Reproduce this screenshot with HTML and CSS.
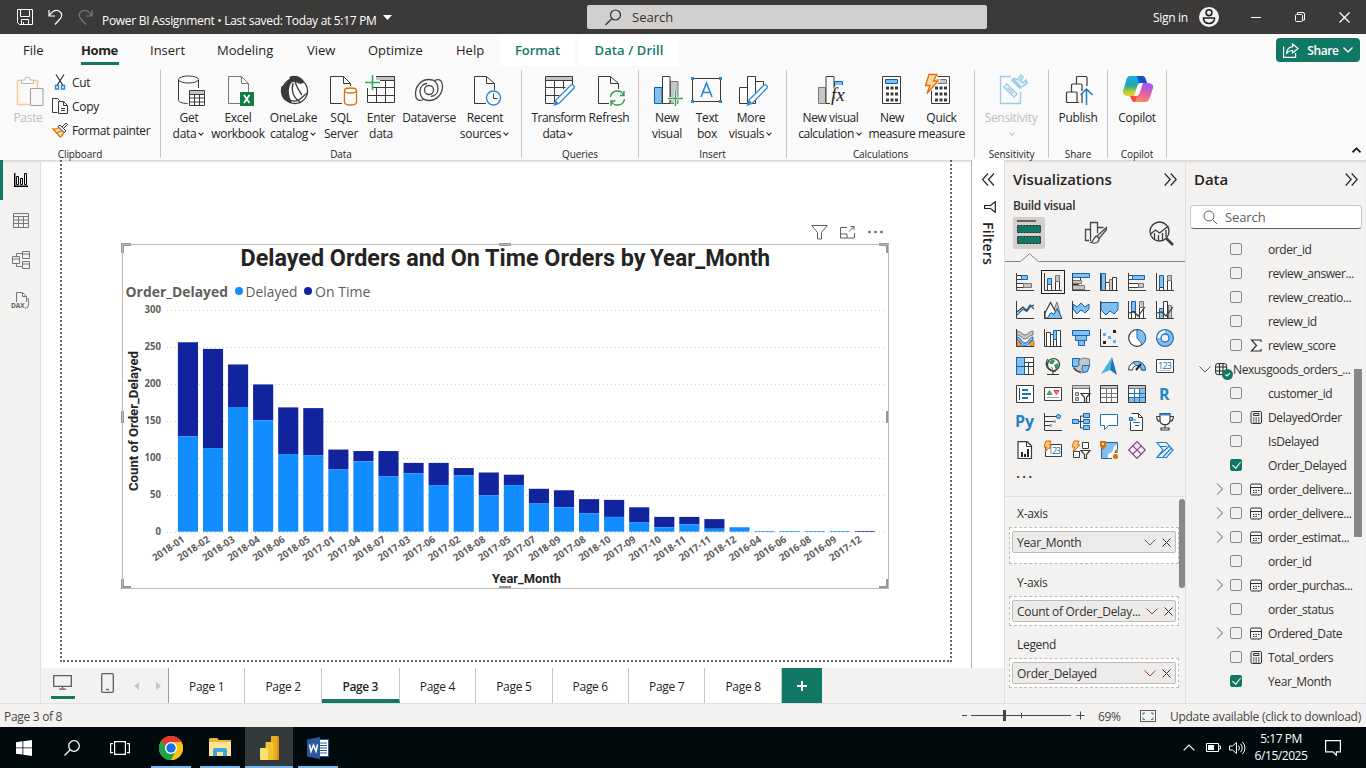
FILE: index.html
```html
<!DOCTYPE html>
<html lang="en">
<head>
<meta charset="utf-8">
<title>Power BI Assignment</title>
<link rel="stylesheet" href="styles.css">
</head>
<body>
<div class="app">
<header class="titlebar">
  <svg class="tb-save" width="16" height="16" viewBox="0 0 16 16" fill="none" stroke="#fff"><path d="M.5.5h15v15h-13l-2-2zM3.500.5v7h9v-7M4.500 15.500v-5h7v5M6.500 13v2.500"/></svg>
  <svg class="tb-undo" width="15" height="16" viewBox="0 0 15 16" fill="none" stroke="#fff" stroke-width="1.200"><path d="M1 1v6h6M1 7C4 2.500 8 .5 11 2c4 2.500 3 6 1 8L7 15.500"/></svg>
  <svg class="tb-redo" width="15" height="16" viewBox="0 0 15 16" fill="none" stroke="#797775" stroke-width="1.200"><path d="M14 1v6H8M14 7C11 2.500 7 .5 4 2 0 4.500 1 8 3 10l5 5.500"/></svg>
  <span class="doc-name">Power BI Assignment <b>•</b> Last saved: Today at 5:17 PM</span>
  <svg class="tb-caret" width="9" height="5" viewBox="0 0 9 5"><path d="M0 0h9L4.500 5z" fill="#fff"/></svg>
  <div class="top-search"><svg width="17" height="17" viewBox="0 0 17 17" fill="none" stroke="#323130" stroke-width="1.200"><circle cx="10.500" cy="6" r="5"/><path d="M7 9.500L.5 16"/></svg><span>Search</span></div>
  <span class="signin">Sign in</span>
  <svg class="avatar" width="20" height="20" viewBox="0 0 20 20"><circle cx="10" cy="10" r="10" fill="#f3f2f1"/><g fill="none" stroke="#201f1e" stroke-width="1.600"><circle cx="10" cy="5.700" r="2.900"/><path d="M4.500 11h11c.5 3-2 5.500-5.500 5.500S4 14 4.500 11z"/></g></svg>
  <svg class="win-min" width="10" height="10" viewBox="0 0 10 10"><path d="M0 5.500h10" stroke="#fff"/></svg>
  <svg class="win-max" width="10" height="10" viewBox="0 0 10 10" fill="none" stroke="#fff"><rect x=".5" y="2.500" width="7" height="7" rx="1"/><path d="M2.500 2V.5H8q1.500 0 1.500 1.500v6H8"/></svg>
  <svg class="win-close" width="11" height="11" viewBox="0 0 11 11"><path d="M.5.5l10 10M10.500.5l-10 10" stroke="#fff" stroke-width="1.200"/></svg>
</header>

<section class="ribbon">
  <nav class="rtabs">
    <a class="t-file">File</a><a class="t-home">Home</a><a class="t-insert">Insert</a><a class="t-model">Modeling</a><a class="t-view">View</a><a class="t-opt">Optimize</a><a class="t-help">Help</a><a class="t-format">Format</a><a class="t-drill">Data / Drill</a>
    <button class="share"><svg width="16" height="15" viewBox="0 0 16 15" fill="none" stroke="#fff" stroke-width="1.200"><path d="M.6 3.500v10.900h12V10M9.500 1l5.500 4.500-5.500 4.500V7.500C7 7.500 5 8.500 3.500 11 3.800 6.500 6 4 9.500 3.800z"/></svg><span>Share</span><svg width="10" height="6" viewBox="0 0 10 6" fill="none" stroke="#fff" stroke-width="1.300"><path d="M.5.5L5 5 9.500.5"/></svg></button>
  </nav>
  <div class="groups">
    <div class="group g-clip">
      <div class="gitems">
        <div class="rb w-paste off"><svg width="32" height="32" viewBox="-2 -1 32 32" fill="none"><path d="M8.500 4.500h-5v24h13" stroke="#f3cf9f" stroke-width="1.500"/><path d="M5 6v21h11V13h7V6" stroke="#fbeed5" stroke-width="1.500"/><path d="M19 4.500h4.500v8" stroke="#f3cf9f" stroke-width="1.500"/><path d="M7.500 7.500V4h3q0-3 3-3t3 3h3v3.500z" fill="#fafafa" stroke="#b9b7b5"/><path d="M16.500 12.500h12.500v17H16.500z" fill="#f7f7f7" stroke="#a19f9d"/></svg><span>Paste</span></div>
        <div class="clips">
          <div><svg width="16" height="16" viewBox="0 0 16 16" fill="none"><path d="M4 .5l7 11M12 .5l-7 11" stroke="#3b3a39" stroke-width="1.300"/><path d="M3.500 11.500h3v3.500h-3zM9.500 11.500h3v3.500h-3z" stroke="#2b88d8" stroke-width="1.400"/></svg><span>Cut</span></div>
          <div><svg width="16" height="16" viewBox="0 0 16 16" fill="none" stroke="#3b3a39"><path d="M5.500 14.500h-5V.5h5l2 2M6.500 3.500h5l4 4v8h-9zM11.500 3.500v4h4M9 10.500h4M9 12.500h4"/></svg><span>Copy</span></div>
          <div><svg width="16" height="16" viewBox="0 0 16 16" fill="none"><path d="M1 7c3 .5 5-.5 6-2l5 5c-1 3-2 4-4 5z" fill="#fbd9a4" stroke="#d86f0b" stroke-width="1.300"/><path d="M4 11l6-2" stroke="#d86f0b"/><path d="M6 4.500L8 3l6 6-2 1.500zM10 5l4-4 1.500 1.500-4 4" fill="#fafafa" stroke="#3b3a39"/></svg><span class="fp">Format painter</span></div>
        </div>
      </div><div class="glabel">Clipboard</div>
    </div>
    <div class="group g-data">
      <div class="gitems">
        <div class="rb w44"><svg width="32" height="32" viewBox="0 0 32 32" fill="none" stroke="#3b3a39"><path d="M5.500 5v20c0 2 4 3.500 9 3.500M25.500 5v8"/><ellipse cx="15.500" cy="4.500" rx="10" ry="3.500"/><path d="M16.500 15.500h15v15h-15z" fill="#fff"/><path d="M17 16h14v3H17z" fill="#c8c6c4" stroke="none"/><path d="M16.500 19.500h15M16.500 23h15M16.500 27h15M21.500 19v11M26.500 19v11"/></svg><span>Get<br>data<i class="cv"></i></span></div>
        <div class="rb w54"><svg width="32" height="32" viewBox="0 0 32 32" fill="none"><path d="M18 28.500H6.500V1.500h13l7 7V17M19.500 1.500v7h7" stroke="#797775"/><rect x="18" y="17" width="14" height="14" fill="#107c41"/><path d="M22 20l5.500 8M27.500 20L22 28" stroke="#fff" stroke-width="1.800"/></svg><span>Excel<br>workbook</span></div>
        <div class="rb w56"><svg width="32" height="32" viewBox="-1 0 32 32" fill="none" stroke="#3b3a39" stroke-width="1.300"><circle cx="17" cy="16" r="12.500" fill="#fff"/><path d="M13 3C9 2 20-1 25 6c1 2-3 3-6 1-4-2-7 0-8 4-2 6-1 10 2 16C6 26 2 20 4 12 6 12 9 8 13 3z" fill="#3b3a39"/><path d="M15 8c-2 8 1 15 7 19M17 7c2 6 4 9 7 13M12 25c8 4 12-3 17-7"/></svg><span>OneLake<br>catalog<i class="cv"></i></span></div>
        <div class="rb w40"><svg width="32" height="32" viewBox="0 0 32 32" fill="none"><path d="M17 28.500H5.500V1.500h13l7 7V11M18.500 1.500v7h7" stroke="#3b3a39"/><path d="M19.500 16v11c0 4 12 4 12 0V16" fill="#fff" stroke="#d86f0b" stroke-width="1.300"/><ellipse cx="25.500" cy="15.500" rx="6" ry="2.500" fill="#fff" stroke="#d86f0b" stroke-width="1.300"/></svg><span>SQL<br>Server</span></div>
        <div class="rb w40"><svg width="32" height="32" viewBox="0 0 32 32" fill="none"><path d="M11 2h18v3H11z" fill="#c8c6c4"/><path d="M11 1.500h18.500v26h-27V13M15 5.500h14M8 12.500h21M3 20.500h26M11.500 12v15M20.500 5.500V27" stroke="#3b3a39"/><path d="M7.500 0v15M0 7.500h15" stroke="#37a660" stroke-width="1.600"/></svg><span>Enter<br>data</span></div>
        <div class="rb w56"><svg width="32" height="32" viewBox="0 0 32 32" fill="none" stroke="#484644" stroke-width="1.300"><path d="M10.500 24.500C5 27 2.500 24 2.500 19C2.500 11 8 4.500 16 4.500c6 0 9 4 9 9.500 0 4-3 7-7 7.500"/><path d="M21.500 5.500C27 3 29.500 6 29.500 11C29.500 19 24 25.500 16 25.500c-6 0-9-4-9-9.500 0-4 3-7 7-7.500"/><circle cx="16" cy="15" r="4.500"/></svg><span>Dataverse</span></div>
        <div class="rb w56"><svg width="32" height="32" viewBox="0 0 32 32" fill="none"><path d="M17 28.500H5.500V1.500h12l8 7V15M17.500 1.500v7h8" stroke="#3b3a39"/><circle cx="24.500" cy="23" r="7" fill="#fff" stroke="#2b88d8" stroke-width="1.400"/><path d="M24.500 18.500v5h4" stroke="#3b3a39"/></svg><span>Recent<br>sources<i class="cv"></i></span></div>
      </div><div class="glabel">Data</div>
    </div>
    <div class="group g-query">
      <div class="gitems">
        <div class="rb w62"><svg width="32" height="32" viewBox="0 0 32 32" fill="none"><path d="M3 2h27v3.500H3z" fill="#c8c6c4"/><path d="M12 28.500H3.500v-27h27V10M3.500 5.500h27M3.500 12.500h20M3.500 20.500h14M12.500 5.500v22M21.500 5.500V14" stroke="#3b3a39"/><path d="M12.500 30l1.500-5L29 10c2-1 4 1 3 3L17 28.500z" fill="#fff" stroke="#2b88d8" stroke-width="1.300"/><path d="M12 30l2-4 3 2.500z" fill="#2b88d8"/></svg><span>Transform<br>data<i class="cv"></i></span></div>
        <div class="rb w39"><svg width="32" height="32" viewBox="0 0 32 32" fill="none"><path d="M16 28.500H5.500V1.500h12l8 7V14M17.500 1.500v7h8" stroke="#3b3a39"/><path d="M17.500 22c1-7 10-8 13-2.500M31 16v4.500h-4M31.500 24c-1 7-10 8-13 2.500M18 31v-5h4.500" stroke="#2c9f48" stroke-width="1.400"/></svg><span>Refresh</span></div>
      </div><div class="glabel">Queries</div>
    </div>
    <div class="group g-insert">
      <div class="gitems">
        <div class="rb w40"><svg width="32" height="32" viewBox="0 0 32 32" fill="none"><path d="M3.500 12.500h7.500v16H3.500z" fill="#83beec" stroke="#0063b1"/><path d="M19.500 6.500h7.500v22h-7.500z" fill="#c8c6c4" stroke="#797775"/><path d="M11.500 1.500h7.500v27h-7.500z" fill="#fff" stroke="#3b3a39"/><path d="M24.500 15v16M17 23.500h15" stroke="#fafafa" stroke-width="3"/><path d="M24.500 15v16M17 23.500h15" stroke="#37a660" stroke-width="1.400"/></svg><span>New<br>visual</span></div>
        <div class="rb w40"><svg width="32" height="32" viewBox="1 0 32 32" fill="none"><rect x="2.500" y="3.500" width="28" height="23" stroke="#3b3a39"/><path d="M1 2h3v3H1zM29 2h3v3h-3zM1 25h3v3H1zM29 25h3v3h-3z" fill="#2b88d8"/><path d="M11 22l5.500-14L22 22M13 17.500h7" stroke="#2b88d8" stroke-width="1.600"/></svg><span>Text<br>box</span></div>
        <div class="rb w48"><svg width="32" height="32" viewBox="0 0 32 32" fill="none"><path d="M12.500 12.500h-8v16h8M20.500 6.500h8V14M12.500 1.500h8v27h-8z" fill="#fff" stroke="#3b3a39"/><path d="M12.500 30l1.500-5L29 10c2-1 4 1 3 3L17 28.500z" fill="#fff" stroke="#2b88d8" stroke-width="1.300"/><path d="M12 30l2-5 3 3z" fill="#2b88d8"/></svg><span>More<br>visuals<i class="cv"></i></span></div>
      </div><div class="glabel">Insert</div>
    </div>
    <div class="group g-calc">
      <div class="gitems">
        <div class="rb w76"><svg width="32" height="32" viewBox="0 0 32 32" fill="none"><path d="M5.500 12.500h7v16h-7z" fill="#c8c6c4" stroke="#797775"/><path d="M21.500 6.500h8v8h-8z" fill="#83beec" stroke="#0063b1"/><path d="M21 24V1.500h-8v27h4" stroke="#3b3a39"/><path d="M17 19L23 10h8v12H19z" fill="#fafafa"/><text class="fx" x="18" y="26">fx</text></svg><span>New visual<br>calculation<i class="cv"></i></span></div>
        <div class="rb w50"><svg width="32" height="32" viewBox="0 0 32 32" fill="none"><path d="M6.500 1.500h18v27h-18z" fill="#fff" stroke="#3b3a39"/><path d="M9.500 4.500h12v4h-12z" fill="#83beec" stroke="#0063b1"/><path d="M10 13h12M10 19h12M10 25h12" stroke="#3b3a39" stroke-width="3" stroke-dasharray="3 1.500"/></svg><span>New<br>measure</span></div>
        <div class="rb w49"><svg width="32" height="32" viewBox="1 0 32 32" fill="none"><path d="M6.500 1.500h18v27h-18z" fill="#fff" stroke="#3b3a39"/><path d="M9.500 4.500h12v4h-12z" fill="#c8c6c4" stroke="#797775"/><path d="M10 13h12M10 19h12M10 25h12" stroke="#3b3a39" stroke-width="3" stroke-dasharray="3 1.500"/><path d="M4-.5h8L8.500 6H13L2 18.500 5 10.500H.5z" fill="#fcd8a0" stroke="#fafafa" stroke-width="3"/><path d="M4-.5h8L8.500 6H13L2 18.500 5 10.500H.5z" fill="#fcd8a0" stroke="#d86f0b" stroke-width="1.300"/></svg><span>Quick<br>measure</span></div>
      </div><div class="glabel">Calculations</div>
    </div>
    <div class="group g-sens">
      <div class="gitems"><div class="rb w62 off"><svg width="32" height="32" viewBox="0 0 32 32" fill="none" stroke="#9fcce8" stroke-width="1.300"><path d="M16 1.500H5.500v27h20V17"/><path d="M9 12l3-3 10 10-3 3zM12.500 12.500l6 6" stroke-width="1.500"/><path d="M17 4l9 9" stroke-width="3.500"/><path d="M19 3l4 2 3-5 2 2-3 4 3 2 3-3 1 3-5 4" stroke-width="1.700"/></svg><span>Sensitivity<br><i class="cv"></i></span></div></div><div class="glabel">Sensitivity</div>
    </div>
    <div class="group g-share">
      <div class="gitems"><div class="rb w50"><svg width="32" height="32" viewBox="0 0 32 32" fill="none" stroke="#3b3a39" stroke-width="1.200"><path d="M17 27.500H5q-.5 0-.5-1V18q0-1 1-1H14q1 0 1 1v10M9.500 17v-7q0-1 1-1H19q1 0 1 1v6M14.500 9V2.500q0-1 1-1H24q1 0 1 1V11M20 18v10"/><path d="M24.500 30V14M18.500 20l6-6 6 6" stroke="#1b80bd" stroke-width="1.500"/></svg><span>Publish</span></div></div><div class="glabel">Share</div>
    </div>
    <div class="group g-copilot">
      <div class="gitems"><div class="rb w50"><svg width="32" height="32" viewBox="-1 1 32 32"><defs><linearGradient id="ca" x1="0" y1="0" x2="0" y2="1"><stop offset="0" stop-color="#1aa6ee"/><stop offset=".5" stop-color="#2ba8a0"/><stop offset=".8" stop-color="#b9d432"/><stop offset="1" stop-color="#f8c82a"/></linearGradient><linearGradient id="cb" x1=".2" y1="0" x2="0" y2="1"><stop offset="0" stop-color="#a05af0"/><stop offset=".5" stop-color="#ec5f9c"/><stop offset="1" stop-color="#ff9a4c"/></linearGradient></defs><path d="M8 2h12q3 0 3.500 3l1.500 4h-6q-3 0-4 4l-3 9H5q-5-1-4-5L4 7q1-5 4-5z" fill="url(#ca)"/><path d="M15 2h5q3 0 3.500 3l1.500 4h-8z" fill="#1b4fc7"/><path d="M23 28H13q-3 0-3.500-3L8 22h6q3 0 4-4l3-9h6q5 1 4 5l-3 9q-1 5-5 5z" fill="url(#cb)"/><path d="M8 22h7l-2 6q-3 0-3.500-3z" fill="#ef4e45"/></svg><span>Copilot</span></div></div><div class="glabel">Copilot</div>
    </div>
    <svg class="collapse" width="9" height="6" viewBox="0 0 9 6" fill="none" stroke="#201f1e" stroke-width="1.800"><path d="M.5 5.300l4-4 4 4"/></svg>
  </div>
</section>

<main class="work">
  <nav class="views">
    <div class="v on"><svg width="14" height="14" viewBox="0 0 14 14" fill="none" stroke="#000"><path d="M.7 0v13.300H14" stroke-width="1.400"/><path d="M2.500 3.500h2v8h-2zM6.500 5.500h2v6h-2zM10.500.5h2v11h-2z"/></svg></div>
    <div class="v"><svg width="16" height="15" viewBox="0 0 16 15" fill="none" stroke="#797775"><path d="M.5.5h15v14H.5zM.5 3.500h15M.5 7h15M.5 10.500h15M5.500 3.500v11M10.500 3.500v11"/></svg></div>
    <div class="v"><svg width="18" height="18" viewBox="1 0 18 18" fill="none" stroke="#797775"><path d="M.5 5.500h7v7h-7zM.5 8h7M10.500.5h7v7h-7zM10.500 3h7M10.500 10.500h7v7h-7zM10.500 13h7M4.500 5.500v-3h6M4.500 12.500v3h6"/></svg></div>
    <div class="v"><svg width="18" height="17" viewBox="1 0 18 17" fill="none" stroke="#797775"><path d="M4.500 10V.5h6l4 4V10M10.500.5v4h4M16 6q1.500 5 0 9l-3 1.500"/><text class="daxt" x="-1" y="16">DAX</text></svg></div>
  </nav>
  <div class="center">
    <div class="stage">
      <div class="canvas">
        <div class="page">
          <div class="visual-tools">
            <svg width="17" height="15" viewBox="0 0 17 15" fill="none" stroke="#605e5c"><path d="M.8.5h15.400L10.500 7.500v6.500h-4V7.500z"/></svg>
            <svg width="15" height="13" viewBox="0 0 15 13" fill="none" stroke="#605e5c"><path d="M7 1.500H.5v10.500h14V7M.5 8H7v4M9 5.500L14 .5M10.500.5H14V4"/></svg>
            <svg width="15" height="4" viewBox="0 0 15 4" fill="#605e5c"><circle cx="1.500" cy="2" r="1.300"/><circle cx="7.500" cy="2" r="1.300"/><circle cx="13.500" cy="2" r="1.300"/></svg>
          </div>
          <svg class="chart" id="chart" width="768" height="346" viewBox="121 243 768 346"></svg>
        </div>
      </div>
      <aside class="filters">
        <svg width="13" height="13" viewBox="0 0 13 13" fill="none" stroke="#252423" stroke-width="1.200"><path d="M6 .5l-5.500 6 5.500 6M12 .5l-5.500 6 5.500 6"/></svg>
        <svg width="12" height="12" viewBox="0 0 12 12" fill="none" stroke="#252423" stroke-width="1.200"><path d="M11.300.7v10.600L6.500 7.500H.6v-3h5.900z"/></svg>
        <span>Filters</span>
      </aside>
    </div>
    <div class="pages">
      <div class="devices">
        <div class="desk"><svg width="19" height="15" viewBox="0 0 19 15" fill="none" stroke="#605e5c" stroke-width="1.300"><path d="M.7.7h17.600v10.600H.7zM9.500 11v3M6 14.200h7"/></svg></div>
        <div class="phone"><svg width="13" height="20" viewBox="0 0 13 20" fill="none" stroke="#605e5c" stroke-width="1.300"><rect x=".7" y=".7" width="11.600" height="18.600" rx="1"/><path d="M5 16.500h3"/></svg></div>
        <svg class="pg-l" width="5" height="8" viewBox="0 0 5 8"><path d="M5 0v8L0 4z" fill="#c8c6c4"/></svg>
        <svg class="pg-r" width="5" height="8" viewBox="0 0 5 8"><path d="M0 0v8l5-4z" fill="#c8c6c4"/></svg>
      </div>
      <a>Page 1</a><a>Page 2</a><a class="cur">Page 3</a><a>Page 4</a><a>Page 5</a><a>Page 6</a><a>Page 7</a><a>Page 8</a><button class="add"><svg width="10" height="10" viewBox="0 0 10 10"><path d="M5 0v10M0 5h10" stroke="#fff" stroke-width="2"/></svg></button>
    </div>
  </div>

  <aside class="viz">
    <div class="phead"><h2>Visualizations</h2><svg width="13" height="13" viewBox="0 0 13 13" fill="none" stroke="#252423" stroke-width="1.200"><path d="M.7.5l5.500 6-5.500 6M6.700.5l5.500 6-5.500 6"/></svg></div>
    <div class="build">Build visual</div>
    <div class="vtabs">
      <div class="vt sel"><svg width="24" height="26" viewBox="0 0 24 26"><path d="M0 1h19" stroke="#201f1e" stroke-width="1.200"/><path d="M.5 5.500h23v7H.5zM.5 16.500h23v7H.5z" fill="#117865" stroke="#201f1e" stroke-dasharray="2 1"/></svg></div>
      <div class="vt"><svg width="24" height="24" viewBox="-1 0 24 24" fill="none" stroke="#484644" stroke-width="1.300"><path d="M5 19.500H1.500v-11H6M6.500 20V1.500h7V12M13.500 6.500h6"/><path d="M22.500 6.500L13 15l2 2.500 7.500-9zM13 15c-3 0-3 5-6 6.500 4 1.500 8 .5 8-4" fill="#f3f2f1"/></svg></div>
      <div class="vt"><svg width="25" height="25" viewBox="0 0 25 25" fill="none" stroke="#3b3a39" stroke-width="1.300"><circle cx="10.500" cy="10.500" r="9.500"/><path d="M1.500 13l5-4 4 3 9-7M5.500 12v6M9.500 14v5M13.500 12v7M17 9v7"/><path d="M17.500 17.500l6.500 6.500" stroke-width="2.500"/></svg></div>
    </div>
    <svg class="pointer" width="180" height="9" viewBox="0 0 180 9" fill="none" stroke="#8a8886"><path d="M0 8.500h15.500L24.500.700 33.500 8.500H181"/></svg>
    <div class="vgrid">
      <svg viewBox="0 0 18 18"><path class="k" d="M.5 0v17.500H18"/><path class="k w" d="M.5 2.500h6v4h-6zM.5 10.500h8v4h-8z"/><path class="b" d="M5.500 2.500h6v4h-6z"/><path class="g" d="M7.500 10.500h8v4h-8z"/></svg>
      <svg class="chosen" viewBox="0 0 18 18"><path class="k" d="M.5 0v17.500H18"/><path class="k w" d="M3.500 11.500h4v6h-4zM11.500 7.500h4v10h-4z"/><path class="b" d="M3.500 5.500h4v6h-4z"/><path class="g" d="M11.500 2.500h4v6h-4z"/></svg>
      <svg viewBox="0 0 18 18"><path class="k w" d="M.5 4.500h8v3h-8zM.5 8.500h6v3h-6z"/><path class="g" d="M.5 7.500h9v3h-9zM.5 12.500h12v4H.5z"/><path class="b" d="M.5.5h17v4H.5z"/><path class="k" d="M.5 0v17.500H18"/></svg>
      <svg viewBox="0 0 18 18"><path class="b" d="M1.500.5h4v17h-4z"/><path class="k w" d="M5.500 9.500h4v8h-4z"/><path class="g" d="M9.500 6.500h3v11h-3z"/><path class="k w" d="M12.500 4.500h4v13h-4z"/><path class="k" d="M.5 0v17.500H18"/></svg>
      <svg viewBox="0 0 18 18"><path class="k" d="M.5 0v17.500H18"/><path class="k w" d="M.5 2.500h4v4h-4zM.5 10.500h10v4H.5z"/><path class="b" d="M4.500 2.500h12v4h-12z"/><path class="g" d="M10.500 10.500h5v4h-5z"/></svg>
      <svg viewBox="0 0 18 18"><path class="k" d="M.5 0v17.500H18"/><path class="b" d="M3.500 2.500h4v12h-4z"/><path class="k w" d="M3.500 14.500h4v3h-4zM11.500 7.500h4v10h-4z"/><path class="g" d="M11.500 2.500h4v5h-4z"/></svg>

      <svg viewBox="0 0 18 18"><path class="k" d="M.5 0v17.500H18"/><path class="bl" d="M1 14L7 8l3 2 4-6 4 4"/><path class="kl" d="M1 11l6-5 4 4 3-4 4-2"/></svg>
      <svg viewBox="0 0 18 18"><path class="g" d="M7 16L13 1l4 15z"/><path class="kl w" d="M1 12L6.500 1.500 15 17H1z"/><path class="b" d="M3 17.500l4-6 3 2 3-6 5 10z"/><path class="k" d="M.5 10v7.500H18"/></svg>
      <svg viewBox="0 0 18 18"><path class="w" d="M1 8l4 4 4-4 4 3 4-4v10H1z"/><path class="b" d="M1 3l4 3 4-4 4 4 4-3v5l-4 4-4-3-4 4-4-5z"/><path class="k" d="M.5 0v17.500H18"/></svg>
      <svg viewBox="0 0 18 18"><path class="w" d="M1 10l17-1v8H1z"/><path class="b" d="M1 1.500h17V9l-4 4-4-3-4 4-5-5z"/><path class="k" d="M.5 0v17.500H18"/></svg>
      <svg viewBox="0 0 18 18"><path class="b" d="M3.500.5h4v10h-4z"/><path class="k w" d="M3.500 10.500h4v7h-4zM11.500 6.500h4v11h-4z"/><path class="g" d="M11.500.5h4v6h-4z"/><path class="k" d="M.5 0v17.500H18"/><path class="kl" d="M1 12l5-1 4 4 7-9"/></svg>
      <svg viewBox="0 0 18 18"><path class="b" d="M3.500 7.500h4v10h-4z"/><path class="g" d="M12.500 4.500h3v13h-3z"/><path class="k w" d="M7.500.5h4v17h-4z"/><path class="k" d="M.5 0v17.500H18"/><path class="kl" d="M1 12l5-1 4 4 7-9"/></svg>

      <svg viewBox="0 0 18 18"><path class="o" d="M1 13h4v4H1zM14 12h4v5h-4z"/><path class="g" d="M1 2c4 0 5 4 8 4s4-4 8-4v4c-4 0-5 4-8 4s-4-4-8-4z"/><path class="b" d="M1 8c4 0 4 6 8 6s4-6 8-6v3c-3 0-4 6-8 6s-5-6-8-6z"/><path class="k" d="M.5 0v17.500H18"/></svg>
      <svg viewBox="0 0 18 18"><path class="k w" d="M2.500 3.500h4v14h-4zM12.500 1.500h4v16h-4z"/><path class="k w" d="M6.500 5.500h3v12h-3z"/><path class="b" d="M9.500 1.500h3v9h-3z"/><path class="k" d="M.5 0v17.500H18"/></svg>
      <svg viewBox="0 0 18 18"><path class="b" d="M.5 1.500h17v5H.5zM3.500 6.500h11v5h-11zM6.500 11.500h6v5h-6z"/></svg>
      <svg viewBox="0 0 18 18"><path class="k" d="M.5 0v17.500H18"/><path fill="#252423" d="M3 12h3v3H3zM13 1h3v3h-3z"/><path fill="#69afe5" d="M3 4h3v3H3zM8 7h3v3H8zM13 11h3v3h-3z"/></svg>
      <svg viewBox="0 0 18 18"><circle class="kl w" cx="9" cy="9" r="8.300"/><path class="b" d="M9 .7V9l5.500 6.500A8.300 8.300 0 0 0 9 .7z"/></svg>
      <svg viewBox="0 0 18 18"><circle cx="9" cy="9" r="6.300" fill="none" stroke="#83beec" stroke-width="4"/><path d="M9 2.700A6.300 6.300 0 0 0 2.700 9" fill="none" stroke="#fff" stroke-width="4"/><circle class="bl" cx="9" cy="9" r="8.400"/><circle class="bl" cx="9" cy="9" r="4"/></svg>

      <svg viewBox="0 0 18 18"><path class="k w" d="M.5.5h17v17H.5z"/><path class="b" d="M.5.5h8v9h-8zM.5 9.500h8v8h-8z"/><path class="k" d="M8.500 5.500h9M8.500 9.500h9M12.500 5.500v12"/></svg>
      <svg viewBox="0 0 18 18"><circle class="kl w" cx="9.500" cy="7.500" r="6"/><path fill="#319b52" d="M5 5l4-3 2 2-2 3H6zM10 8l4-2 1 3-3 4zM6 9l3 2v2z"/><path class="kl" d="M4 2Q1 6 3 10q3 5 9 4M9 14v3M3 17.500h12"/></svg>
      <svg viewBox="0 0 18 18"><path class="g" d="M.5 2l6 1 5-2 6 1v7l-3 5-6 2-6-3-2-5z"/><path class="b" d="M.5 1.500h7l-1 4 1 2-2 2h-5zM10.500 8.500h7l-2 6-4 1-1.500-3z"/><path class="kl" d="M2 11l3 3 4 1"/></svg>
      <svg viewBox="0 0 18 18"><path fill="#45b5de" d="M12 0L1 17l9-4z"/><path fill="#1a78b8" d="M12 0l5 18-7-5z"/></svg>
      <svg viewBox="0 0 18 18"><path class="k w" d="M.5 13a8.500 8.500 0 0 1 17 0h-4a4.500 4.500 0 0 0-9 0z"/><path class="b" d="M5 5.500a8.500 8.500 0 0 1 12.500 7.500h-4A4.500 4.500 0 0 0 8 8.500z"/><path d="M8 13l5-6" stroke="#252423" stroke-width="2"/></svg>
      <svg viewBox="0 0 18 18"><path class="k w" d="M.5 2.500h17v13H.5z"/><text class="num" x="2" y="11.500" textLength="14">123</text><path stroke="#c8c6c4" d="M3 13.500h12"/></svg>

      <svg viewBox="0 0 18 18"><path class="k w" d="M.5.5h17v17H.5z"/><path class="k" d="M3.500 3v12"/><path stroke="#1c74bd" stroke-width="1.800" d="M6 5h6M6 13h6M6 9h9"/></svg>
      <svg viewBox="0 0 18 18"><path class="k w" d="M.5 2.500h17v13H.5z"/><path fill="#4eac6c" stroke="#37a660" d="M3 9.500l2.500-4 2.500 4z"/><path fill="#f48a91" stroke="#e33340" d="M10 5.500h5l-2.500 4z"/><path stroke="#a19f9d" d="M3 12.500h12"/></svg>
      <svg viewBox="0 0 18 18"><path class="k w" d="M.5.5h17v17H.5z"/><path class="g" d="M.5.5h17v3H.5zM3.500 7.500h3v3h-3zM3.500 12.500h3v3h-3z"/><path class="kl w" d="M9 8.500h9l-3.500 4v5h-2v-5z"/></svg>
      <svg viewBox="0 0 18 18"><path class="k w" d="M.5.5h17v17H.5z"/><path class="g" d="M.5.5h17v3H.5z"/><path stroke="#797775" d="M.5 8.500h17M.5 12.500h17M6.500 4v13M11.500 4v13"/><path class="k" d="M.5.5h17v17H.5z"/></svg>
      <svg viewBox="0 0 18 18"><path class="k w" d="M.5.5h17v17H.5z"/><path class="g" d="M.5.5h17v3H.5z"/><path fill="#83beec" d="M12 4h5v13H1v-4h11z"/><path stroke="#1c74bd" d="M.5 8.500h17M.5 12.500h17M6.500 4v13M11.500 4v13"/><path class="k" d="M.5.5h17v17H.5z"/></svg>
      <svg viewBox="0 0 18 18"><text class="rpy" x="3" y="15">R</text></svg>

      <svg viewBox="0 0 18 18"><text class="rpy" x="-1" y="14">Py</text></svg>
      <svg viewBox="0 0 18 18"><path class="k" d="M.5 0v17.500H18M1 3.500h12M1 8.500h8M1 12.500h5"/><circle class="b" cx="14.500" cy="3.500" r="2"/><circle class="g" cx="10.500" cy="8.500" r="1"/><circle class="g" cx="6.500" cy="12.500" r="1"/></svg>
      <svg viewBox="0 0 18 18"><path class="k" d="M6 8.500h6M8.500 3v12M8.500 3h4M8.500 15h4"/><path class="b" d="M.5 6.500h6v4h-6zM11.500.5h6v4h-6zM11.500 6.500h6v4h-6zM11.500 12.500h6v4h-6z"/></svg>
      <svg viewBox="0 0 18 18"><path class="w" stroke="#1c74bd" d="M.5 1.500h17v11h-9l-4 4v-4h-4z"/></svg>
      <svg viewBox="0 0 18 18"><path class="k w" d="M3.500.5h7l4 4v13h-12v-9"/><path class="k" d="M10.500.5v4h4"/><path stroke="#1c74bd" d="M5 9.500h7M7 12.500h4M5 7h3"/><path class="b" d="M1.500 4.500h3v3h-3z"/></svg>
      <svg viewBox="0 0 18 18"><path class="kl w" d="M4 .7h10v6q0 5-5 5t-5-5zM4 3.500H.7q0 5 4 5M14 3.500h3.300q0 5-4 5M9 12v3M5 17h8v-2H5z"/><path stroke="#2b88d8" stroke-width="2" d="M4 1.500h10"/></svg>

      <svg viewBox="0 0 18 18"><path class="kl w" d="M2 .7h9l4.500 4v12.800H2z"/><path class="k" d="M10.500.5v5h5"/><path stroke="#252423" stroke-width="2" d="M6 16v-5M9 16v-3M12 16V8"/></svg>
      <svg viewBox="0 0 18 18"><path class="k w" d="M1.500 3.500h16v12h-16z"/><text class="num" x="4" y="12.500" textLength="13">123</text><path class="z" d="M2 0h5L5.500 4H8L1 11l1.500-5H0z"/></svg>
      <svg viewBox="0 0 18 18"><path class="k w" d="M10.500 1.500h6v6h-6zM1.500 10.500h6v6h-6z"/><path class="kl w" d="M9 9.500h9l-3.500 4v4h-2v-4z"/><path class="z" d="M2 0h5L5.500 4H8L1 11l1.500-5H0z"/></svg>
      <svg viewBox="0 0 18 18"><path class="b" d="M1.500 17.500V1.500h16V8L12 17.500z"/><path fill="#fff" d="M8 17q-1-4 2-5t3-4q1-4 4-4v4q-3 1-3 4t-3 5z"/><path fill="#f3f2f1" d="M12 12h6v6h-6z"/><path fill="#d86f0b" d="M0 0h6v5l-3 4-3-4z"/><circle fill="#d86f0b" cx="15.500" cy="15.500" r="2.500"/><circle fill="#d86f0b" cx="16.500" cy="10.500" r="1.500"/><circle fill="#fff" cx="3" cy="3" r="1"/></svg>
      <svg viewBox="0 0 18 18" fill="#fff" stroke="#8c3a96" stroke-width="1.200"><path d="M9 .7L17.300 9 9 17.300.7 9z"/><path d="M4.800 4.800l8.400 8.400M13.200 4.800l-8.400 8.400"/></svg>
      <svg viewBox="0 0 18 18" fill="#fff" stroke="#1b84d8" stroke-width="1.200"><path d="M1 1.500h9.500L17 9l-6.500 7.500H1L7 9z"/><path d="M4 5.500h7M2 15L13.500 5M7 16l8.500-9" /></svg>
    </div>
    <div class="dots">...</div>
    <div class="wells">
      <div class="wl">
        <label>X-axis</label>
        <div class="well tall"><div class="pill"><span>Year_Month</span><svg width="12" height="7" viewBox="0 0 12 7"><path d="M.5.5L6 6l5.500-5.500" fill="none" stroke="#2b6cb0"/></svg><svg width="9" height="9" viewBox="0 0 9 9"><path d="M.5.5l8 8M8.500.5l-8 8" stroke="#323130"/></svg></div></div>
        <label>Y-axis</label>
        <div class="well"><div class="pill"><span>Count of Order_Delay...</span><svg width="12" height="7" viewBox="0 0 12 7"><path d="M.5.5L6 6l5.500-5.500" fill="none" stroke="#9a4a2a"/></svg><svg width="9" height="9" viewBox="0 0 9 9"><path d="M.5.5l8 8M8.500.5l-8 8" stroke="#323130"/></svg></div></div>
        <label class="l3">Legend</label>
        <div class="well"><div class="pill"><span>Order_Delayed</span><svg width="12" height="7" viewBox="0 0 12 7"><path d="M.5.5L6 6l5.500-5.500" fill="none" stroke="#9a4a2a"/></svg><svg width="9" height="9" viewBox="0 0 9 9"><path d="M.5.5l8 8M8.500.5l-8 8" stroke="#323130"/></svg></div></div>
      </div>
      <div class="vscroll"></div>
    </div>
  </aside>

  <aside class="data">
    <div class="phead"><h2>Data</h2><svg width="13" height="13" viewBox="0 0 13 13" fill="none" stroke="#252423" stroke-width="1.200"><path d="M.7.5l5.500 6-5.500 6M6.700.5l5.500 6-5.500 6"/></svg></div>
    <div class="dsearch"><svg width="15" height="15" viewBox="0 0 15 15" fill="none" stroke="#605e5c"><circle cx="6" cy="6" r="5"/><path d="M9.500 9.500L14 14"/></svg><span>Search</span></div>
    <svg class="defs" width="0" height="0"><defs>
      <symbol id="cal" viewBox="0 0 13 13"><g fill="none" stroke="#323130"><rect x=".5" y="1" width="11" height="11" rx="1.500"/><path d="M1 4.500h10.500"/><path d="M3 7.500h7M3 9.500h4" stroke-dasharray="1.500 1"/></g></symbol>
      <symbol id="calc" viewBox="0 0 13 13"><g fill="none" stroke="#323130"><rect x="1" y=".5" width="10.500" height="12" rx="1.500"/><path d="M3.500 2.500h5.500v2H3.500z"/><path d="M3 7h7M3 9h7M3 11h7" stroke-dasharray="1.500 1"/></g></symbol>
      <symbol id="sum" viewBox="0 0 13 13"><path d="M11 3V1H1.500l5 5.500-5 5.500H11v-2" fill="none" stroke="#323130" stroke-width="1.200"/></symbol>
      <symbol id="chev" viewBox="0 0 8 12"><path d="M1 .5L6.500 6 1 11.500" fill="none" stroke="#605e5c"/></symbol>
    </defs></svg>
    <div class="dlist">
      <ul>
        <li><i></i><b></b><u></u><span>order_id</span></li>
        <li><i></i><b></b><u></u><span>review_answer...</span></li>
        <li><i></i><b></b><u></u><span>review_creatio...</span></li>
        <li><i></i><b></b><u></u><span>review_id</span></li>
        <li><i></i><b></b><u><svg><use href="#sum"/></svg></u><span>review_score</span></li>
        <li class="table"><svg class="tchev" width="12" height="7" viewBox="0 0 12 7"><path d="M.5.5L6 6l5.500-5.500" fill="none" stroke="#605e5c"/></svg><svg class="ticon" width="18" height="18" viewBox="0 0 18 18" fill="none" stroke="#252423"><rect x=".6" y="1.600" width="11" height="11" rx="2"/><path d="M4.500 1.500v11M8 1.500v11M.5 5h11M.5 9h11"/><circle cx="12.500" cy="12.500" r="5.500" fill="#117865" stroke="none"/><path d="M10.500 12.500l1.500 1.500 2.800-2.800" stroke="#fff" stroke-width="1.200"/></svg><span>Nexusgoods_orders_...</span></li>
        <li><i></i><b></b><u></u><span>customer_id</span></li>
        <li><i></i><b></b><u><svg><use href="#calc"/></svg></u><span>DelayedOrder</span></li>
        <li><i></i><b></b><u></u><span>IsDelayed</span></li>
        <li><i></i><b class="ck"></b><u></u><span>Order_Delayed</span></li>
        <li><i><svg><use href="#chev"/></svg></i><b></b><u><svg><use href="#cal"/></svg></u><span>order_delivere...</span></li>
        <li><i><svg><use href="#chev"/></svg></i><b></b><u><svg><use href="#cal"/></svg></u><span>order_delivere...</span></li>
        <li><i><svg><use href="#chev"/></svg></i><b></b><u><svg><use href="#cal"/></svg></u><span>order_estimat...</span></li>
        <li><i></i><b></b><u></u><span>order_id</span></li>
        <li><i><svg><use href="#chev"/></svg></i><b></b><u><svg><use href="#cal"/></svg></u><span>order_purchas...</span></li>
        <li><i></i><b></b><u></u><span>order_status</span></li>
        <li><i><svg><use href="#chev"/></svg></i><b></b><u><svg><use href="#cal"/></svg></u><span>Ordered_Date</span></li>
        <li><i></i><b></b><u><svg><use href="#calc"/></svg></u><span>Total_orders</span></li>
        <li><i></i><b class="ck"></b><u></u><span>Year_Month</span></li>
      </ul>
      <div class="dscroll"></div>
    </div>
  </aside>
</main>

<footer class="status">
  <span class="pgof">Page 3 of 8</span>
  <svg class="slider" width="125" height="13" viewBox="0 0 125 13" stroke="#484644"><path d="M1 6.500h5M10 6.500h100M60.500 4v5"/><path d="M43.500 1v11" stroke-width="3"/><path d="M119.500 2.500v8M115.500 6.500h8"/></svg>
  <span class="pct">69%</span>
  <svg class="fit" width="16" height="12" viewBox="0 0 16 12" fill="none"><rect x=".5" y=".5" width="15" height="11" stroke="#6b5468"/><path d="M3 5V3h2M11 3h2v2M13 7.500v2h-2M5 9.500H3v-2" stroke="#2b8a57"/></svg>
  <span class="upd">Update available (click to download)</span>
</footer>

<footer class="taskbar">
  <div class="tk start"><svg width="16" height="16" viewBox="0 0 16 16" fill="#fff"><path d="M0 2.200l6.500-.9v6.200H0zM7.300 1.200L16 0v7.500H7.300zM0 8.300h6.500v6.300L0 13.700zM7.300 8.300H16V16l-8.700-1.200z"/></svg></div>
  <div class="tk"><svg width="16" height="16" viewBox="0 0 16 16" fill="none" stroke="#fff" stroke-width="1.300"><circle cx="10" cy="6" r="5.300"/><path d="M6 10L.5 15.500"/></svg></div>
  <div class="tk"><svg width="20" height="14" viewBox="0 0 20 14" fill="none" stroke="#fff" stroke-width="1.200"><path d="M4.600.6h10.800v12.800H4.600zM3 2.600H.6v9H3M17 2.600h2.400v9H17"/></svg></div>
  <div class="tk run chrome"><svg width="24" height="24" viewBox="0 0 24 24"><circle cx="12" cy="12" r="12" fill="#fbc116"/><path d="M12 12L1.600 6A12 12 0 0 1 22.400 6z" fill="#e33b2e"/><path d="M12 12L1.600 6A12 12 0 0 0 12 24l5-9z" fill="#1fa24a"/><path d="M12 6h10.400A12 12 0 0 1 12 24l5.200-9z" fill="#fbc116"/><circle cx="12" cy="12" r="6" fill="#fff"/><circle cx="12" cy="12" r="4.700" fill="#1a73e8"/></svg></div>
  <div class="tk run files"><svg width="22" height="19" viewBox="0 0 22 19"><path d="M0 1.500Q0 0 1.500 0H8l2 2h12v16H0z" fill="#e8b63c"/><path d="M0 4h22v14H0z" fill="#ffe493"/><path d="M4 18v-6q0-2 2-2h10q2 0 2 2v6h-4v-4H8v4z" fill="#38a9e0"/></svg></div>
  <div class="tk run pbi"><svg width="19" height="24" viewBox="0 0 19 24"><rect x="11" y="0" width="8" height="24" rx="1" fill="#d98f10"/><rect x="11" y="0" width="6" height="24" rx="1" fill="#e8ad1c"/><rect x="5.500" y="6" width="8" height="18" rx="1" fill="#f2c530"/><rect x="0" y="12" width="8" height="12" rx="1" fill="#fbdf6f"/></svg></div>
  <div class="tk run word"><svg width="22" height="22" viewBox="0 0 22 22"><path d="M12 2.500h9.500v17H12z" fill="#fff" stroke="#2b579a"/><path d="M13 6h7M13 8.500h7M13 11h7M13 13.500h7M13 16h7" stroke="#2b579a"/><path d="M0 2.500L13 0v22L0 19.500z" fill="#2b579a"/><path d="M2.500 7.500l1.500 7 2.500-6.500L9 14.500l1.500-7" fill="none" stroke="#fff" stroke-width="1.500"/></svg></div>
  <div class="tray">
    <svg class="t-up" width="12" height="7" viewBox="0 0 12 7"><path d="M.7 6.300L6 1l5.300 5.300" fill="none" stroke="#fff" stroke-width="1.200"/></svg>
    <svg class="t-bat" width="15" height="9" viewBox="0 0 15 9" fill="none" stroke="#fff"><path d="M.5.5h12v8H.5zM13 3h1.500v3H13"/><path d="M2 2h6v5H2z" fill="#fff" stroke="none"/></svg>
    <svg class="t-spk" width="17" height="14" viewBox="0 0 17 14" fill="none" stroke="#fff"><path d="M.5 5v4h3l4 3.500v-11L3.500 5zM9.500 4.500q2 2.500 0 5M11.500 2.800q3.500 4.200 0 8.400M13.500 1q5 6 0 12"/></svg>
    <div class="clock">5:17 PM<br>6/15/2025</div>
    <svg class="t-note" width="16" height="16" viewBox="0 0 16 16" fill="none" stroke="#fff" stroke-width="1.200"><path d="M.6.6h14.800v11.300h-4v3.500L8 11.900H.6z"/></svg>
  </div>
</footer>
</div>
<script src="chart.js"></script>
</body>
</html>
```
FILE: styles.css
```css
* { box-sizing: border-box; }
body { margin: 0; width: 1366px; height: 768px; overflow: hidden; font-family: "Open Sans", "Noto Sans", sans-serif; font-size: 12px; letter-spacing: -0.3px; color: #323130; }
svg { display: block; flex: none; }
svg text { letter-spacing: normal; }
button { font: inherit; letter-spacing: inherit; border: 0; padding: 0; }
.app { display: flex; flex-direction: column; width: 1366px; height: 768px; }

.titlebar { display: flex; align-items: center; height: 34px; flex: none; background: #3b3a39; color: #fff; white-space: nowrap; padding-left: 17px; }
.tb-undo { margin-left: 15px; }
.tb-redo { margin-left: 15px; }
.doc-name { width: 281px; margin-left: 9px; padding-top: 6px; }
.doc-name b { font-weight: 400; }
.tb-caret { width: 9px; }
.top-search { display: flex; align-items: center; gap: 10px; width: 400px; height: 24px; margin-left: 195px; padding-left: 18px; border-radius: 2px; background: #d2d0ce; color: #323130; font-size: 13px; letter-spacing: 0; }
.signin { width: 46px; margin-left: 166px; padding-top: 1px; }
.win-min { margin-left: 32px; }
.win-max { margin-left: 34px; }
.win-close { margin-left: 34px; }

.ribbon { height: 126px; flex: none; background: #fafafa; color: #252423; }
.rtabs { display: flex; height: 32px; align-items: center; padding-left: 23px; font-size: 13px; letter-spacing: 0; white-space: nowrap; }
.rtabs a { height: 32px; line-height: 32px; flex: none; }
.t-file { width: 58px; }
.t-home { width: 38px; margin-right: 31px; font-weight: 700; letter-spacing: -0.4px; border-bottom: 3px solid #117865; }
.rtabs .t-home { height: 31px; align-self: flex-start; }
.t-insert { width: 67px; }
.t-model { width: 90px; }
.t-view { width: 61px; }
.t-opt { width: 88px; }
.t-help { width: 44px; }
.t-format, .t-drill { background: #fff; color: #117865; font-weight: 600; text-align: center; }
.t-format { width: 75px; letter-spacing: -0.1px; }
.t-drill { width: 100px; margin-left: 4px; letter-spacing: 0.1px; }
.share { display: flex; align-items: center; justify-content: center; gap: 8px; width: 84px; height: 24px; margin-left: 597px; background: #117865; color: #fff; border-radius: 4px; font-size: 12px; font-weight: 600; letter-spacing: -0.4px; }
.share svg:last-child { margin-left: -4px; }

.groups { display: flex; height: 94px; padding-top: 4px; position: relative; }
.group { display: flex; flex-direction: column; height: 88px; border-right: 1px solid #c8c6c4; flex: none; }
.gitems { display: flex; height: 77px; padding-top: 5px; flex: none; }
.glabel { text-align: center; font-size: 10px; line-height: 14px; letter-spacing: -0.1px; }
.g-clip { width: 161px; }
.g-data { width: 361px; padding-left: 6px; }
.g-data .glabel { padding-right: 6px; }
.g-query { width: 117px; padding-left: 5px; }
.g-insert { width: 148px; padding-left: 8px; }
.g-insert .glabel { padding-right: 8px; }
.g-calc { width: 188px; padding-left: 4px; }
.g-sens { width: 74px; padding-left: 5px; }
.g-sens .glabel, .g-query .glabel { padding-right: 5px; }
.g-share, .g-copilot { width: 59px; padding-left: 4px; }
.g-share .glabel, .g-copilot .glabel, .g-calc .glabel { padding-right: 4px; }
.rb { display: flex; flex-direction: column; align-items: center; flex: none; text-align: center; line-height: 16px; white-space: nowrap; }
.rb > svg { overflow: visible; height: 32px; margin-bottom: 3px; }
.rb > span { margin: 0 -10px; }
.off { color: #c0bebc; }
.w-paste { width: 56px; }
.w39 { width: 39px; } .w40 { width: 40px; } .w44 { width: 44px; } .w48 { width: 48px; } .w49 { width: 49px; } .w50 { width: 50px; } .w54 { width: 54px; } .w56 { width: 56px; } .w62 { width: 62px; } .w76 { width: 76px; }
.w54 + .w56 > span { padding-left: 1px; }
.w76 > span { padding-left: 3px; letter-spacing: -0.4px; }
.w39 > span { padding-left: 1px; }
.g-query .w62 > span { letter-spacing: -0.5px; padding-left: 1px; }
.cv { display: inline-block; width: 4px; height: 4px; margin: 0 2px 3px 3px; border: solid currentColor; border-width: 0 1.500px 1.500px 0; transform: rotate(45deg); }
.clips > div { display: flex; align-items: center; height: 24px; gap: 4px; margin-left: -4px; }
.clips { margin-top: -5px; }
.fp { letter-spacing: -0.4px; }
.fx { font: italic 19px "Liberation Serif", serif; fill: #252423; }
.collapse { position: absolute; right: 5px; bottom: 7px; }

.work { display: flex; height: 543px; flex: none; background: #f3f2f1; box-shadow: inset 0 3px 3px -2px #c8c6c4; }
.views { width: 41px; border-right: 1px solid #e1dfdd; flex: none; }
.v { height: 40px; display: flex; align-items: center; padding-left: 13px; }
.v.on { border-left: 3px solid #117865; padding-left: 11px; }
.v svg { overflow: visible; }
.daxt { font: bold 6.500px "Open Sans", sans-serif; fill: #605e5c; stroke: none; }
.center { width: 963px; flex: none; display: flex; flex-direction: column; }
.stage { display: flex; height: 508px; }
.canvas { width: 930px; background: #fff; padding-left: 19px; box-shadow: inset 0 3px 3px -2px #c8c6c4; }
.page { width: 892px; height: 502px; border: 2px dotted #666; border-top: 0; display: flex; flex-direction: column; padding-left: 59px; }
.visual-tools { display: flex; align-items: center; height: 18px; margin-top: 63px; padding-left: 690px; gap: 12px; }
.visual-tools svg:last-child { margin-left: 1px; }
.visual-tools svg:first-child { margin-left: -.500px; }
.chart { margin-top: 2px; overflow: visible; }
.filters { width: 33px; background: #fff; border-left: 1px solid #b3b0ad; display: flex; flex-direction: column; align-items: center; padding-top: 13px; padding-left: 1px; }
.filters svg + svg { margin: 15px 0 9px 3px; }
.filters span { writing-mode: vertical-rl; font-size: 14px; letter-spacing: 0.2px; font-weight: 600; color: #252423; }

.pages { display: flex; height: 35px; }
.devices { width: 128px; display: flex; border-right: 1px solid #a19f9d; padding-left: 10px; flex: none; }
.desk { width: 24px; height: 31px; border-bottom: 3px solid #117865; border-radius: 1px; padding: 7px 0 0 2px; }
.phone { margin: 5px 0 0 26px; width: 33px; }
.pg-l { margin-top: 14px; margin-left: 0; }
.pg-r { margin: 14px 0 0 17px; }
.pages a { width: 76.400px; flex: none; background: #fff; border-right: 1px solid #c8c6c4; text-align: center; line-height: 37px; color: #252423; }
.pages .cur { font-weight: 600; border-bottom: 4px solid #117865; width: 78px; letter-spacing: -0.4px; }
.add { width: 40px; background: #117865; display: flex; align-items: center; justify-content: center; }

.viz { width: 182px; border-right: 1px solid #e1dfdd; border-left: 1px solid #e1dfdd; flex: none; }
.phead { display: flex; justify-content: space-between; align-items: center; height: 38px; padding: 0 8px; }
.phead h2 { margin: 0; font-size: 15px; font-weight: 600; letter-spacing: -0.05px; color: #252423; }
.build { padding-left: 8px; font-weight: 600; line-height: 16px; letter-spacing: -0.35px; }
.vtabs { display: flex; padding: 3px 0 0 8px; gap: 34px; height: 36px; }
.vt { width: 32px; height: 32px; display: flex; align-items: center; justify-content: center; flex: none; }
.vt.sel { background: #d2d0ce; border-radius: 2px; }
.pointer { margin-top: 3px; }
.vgrid { display: grid; grid-template-columns: repeat(6, 28px); grid-auto-rows: 28px; padding: 6px 0 0 7px; }
.vgrid svg { width: 18px; height: 18px; margin: 5px 0 0 4px; overflow: visible; fill: none; }
.vgrid .chosen { width: 24px; height: 24px; padding: 2px; margin: 2px 2px 2px 1px; border: 1px solid #201f1e; }
.k { stroke: #3b3a39; fill: none; }
.w { fill: #fff; }
.b { stroke: #1068b5; fill: #83beec; }
.g { stroke: #797775; fill: #c8c6c4; }
.o { stroke: #d86f0b; fill: #f4a24b; }
.bl { stroke: #1c74bd; stroke-width: 1.300; fill: none; }
.kl { stroke: #3b3a39; stroke-width: 1.200; fill: none; }
.kl.w, .k.w { fill: #fff; }
.z { stroke: #d86f0b; fill: #fcc477; }
.num { font: 9px "Open Sans", sans-serif; fill: #1068b5; }
.rpy { font: bold 16px "Open Sans", sans-serif; fill: #2384c6; }
.dots { height: 33px; border-bottom: 1px solid #e1dfdd; padding-left: 11px; font-size: 15px; line-height: 16px; font-weight: 600; letter-spacing: 2px; }
.wells { display: flex; height: 205px; }
.wl { width: 174px; padding: 7px 0 0 4px; flex: none; }
.wl label { display: block; height: 23px; line-height: 19px; padding-left: 8px; }
.wl .well + label { margin-top: 9px; }
.well { width: 170px; height: 30px; padding: 3px 2px; border: 1px dashed #bebbb8; background: #fff; }
.well.tall { height: 37px; }
.pill { display: flex; align-items: center; height: 22px; width: 164px; padding: 0 4px; gap: 6px; border: 1px solid #bebbb8; border-radius: 2px; background: #edebe9; }
.pill span { flex: 1; white-space: nowrap; padding-top: 1px; letter-spacing: -0.3px; }
.vscroll { width: 6px; height: 89px; margin-top: 2px; border-radius: 3px; background: #8a8886; }

.data { width: 180px; flex: none; }
.dsearch { display: flex; align-items: center; gap: 7px; width: 172px; height: 24px; margin: 7px 0 0 4px; padding-left: 12px; background: #fff; border: 1px solid #c8c6c4; border-bottom-color: #605e5c; border-radius: 4px; font-size: 13px; letter-spacing: -0.1px; color: #605e5c; }
.defs { position: absolute; }
.dlist { display: flex; padding-top: 8px; }
.dlist ul { margin: 0; padding: 0 0 0 28px; width: 168px; list-style: none; flex: none; }
.dlist li { display: flex; align-items: center; height: 24px; white-space: nowrap; }
.dlist i { width: 16px; flex: none; padding-left: 2px; }
.dlist i svg { width: 8px; height: 12px; }
.dlist b { width: 12px; height: 12px; border: 1px solid #8a8886; border-radius: 2px; flex: none; }
.dlist .ck { background: #117865; border-color: #117865; display: flex; justify-content: center; }
.ck::after { content: ""; width: 4px; height: 7px; border: solid #fff; border-width: 0 1px 1px 0; transform: rotate(40deg); }
.dlist u { width: 26px; padding-left: 8px; flex: none; text-decoration: none; }
.dlist u svg { width: 13px; height: 13px; }
.dlist span { padding-top: 1px; letter-spacing: -0.4px; }
.dlist .table { margin-left: -15px; }
.ticon { margin: 4px 0 0 4px; }
.dscroll { width: 8px; height: 168px; margin-top: 132px; background: #8a8886; }

.status { display: flex; align-items: center; height: 24px; flex: none; padding-left: 4px; background: #f3f2f1; border-top: 1px solid #e1dfdd; color: #484644; white-space: nowrap; }
.status span { padding-top: 2px; }
.pgof { width: 957px; }
.pct { width: 42px; margin-left: 12px; }
.upd { margin-left: 14px; letter-spacing: -0.27px; }

.taskbar { display: flex; height: 41px; flex: none; background: #010b0e; color: #fff; }
.tk { width: 48px; height: 41px; display: flex; align-items: center; justify-content: center; flex: none; }
.run { border-bottom: 2px solid #76b9ed; padding-top: 2px; }
.chrome { width: 40px; margin-left: 7px; }
.files { width: 40px; margin-left: 9px; }
.pbi { margin-left: 5px; background: #33393b; }
.word { width: 40px; margin-left: 5px; }
.tray { display: flex; align-items: center; margin-left: 845px; }
.t-bat { margin-left: 11px; }
.t-spk { margin-left: 8px; }
.clock { width: 60px; margin: -1px 0 0 5px; text-align: center; line-height: 17px; letter-spacing: -0.45px; }
.t-note { margin-left: 14px; }

.c-title { font: 700 24px Roboto, sans-serif; fill: #252423; }
.c-axis { font: 700 12px Roboto, sans-serif; fill: #252423; }
.c-tick { font: 700 10px "Open Sans", sans-serif; fill: #605e5c; }
.c-leg { font: 15px "Open Sans", sans-serif; fill: #605e5c; }
.c-leg.h { font-weight: 700; }
.c-grid { stroke: #d2d0ce; stroke-dasharray: 1 3; }
.c-frame { fill: none; stroke: #bdbbb9; }
.c-handle { fill: none; stroke: #979593; stroke-width: 3; }
.delayed { fill: #118dff; }
.ontime { fill: #12239e; }
```
FILE: chart.js
```js
const rows = [
  ["2018-01", 129, 256], ["2018-02", 113, 247], ["2018-03", 168.5, 226], ["2018-04", 150.5, 199],
  ["2018-06", 105, 168], ["2018-05", 103, 167], ["2017-01", 84, 111], ["2017-04", 95, 109],
  ["2018-07", 75, 109], ["2017-03", 79, 93], ["2017-06", 63, 93], ["2017-02", 76, 86],
  ["2018-08", 49, 80], ["2017-05", 63, 77], ["2017-07", 38, 58], ["2018-09", 33, 56],
  ["2017-08", 25, 44], ["2018-10", 20, 43], ["2017-09", 13, 33], ["2017-10", 6, 20],
  ["2018-11", 10, 20], ["2017-11", 4, 17], ["2018-12", 6, 6], ["2016-04", 1, 1],
  ["2016-06", 1, 1], ["2016-08", 1, 1], ["2016-09", 1, 1], ["2017-12", 0, 1]
];
const base = 531.7, unit = 0.74, first = 177.9, pitch = 25.07, barWidth = 20.1;
const text = (cls, x, y, width, content, extra = "") =>
  `<text class="${cls}" x="${x}" y="${y}" textLength="${width}" lengthAdjust="spacingAndGlyphs" ${extra}>${content}</text>`;

let out = "";
for (let v = 0; v <= 300; v += 50) {
  const y = Math.round(base - v * unit) + 0.5;
  const w = v >= 100 ? 16.5 : v ? 11 : 5.5;
  out += `<path class="c-grid" d="M167 ${y}H885"/>`;
  out += text("c-tick", 161 - w, y + 2.7, w, v);
}
rows.forEach(([label, delayed, total], i) => {
  const x = first + i * pitch;
  const yTotal = base - total * unit;
  const yDelayed = base - delayed * unit;
  out += `<rect class="ontime" x="${x}" y="${yTotal}" width="${barWidth}" height="${yDelayed - yTotal}"/>`;
  out += `<rect class="delayed" x="${x}" y="${yDelayed}" width="${barWidth}" height="${base - yDelayed}"/>`;
  out += text("c-tick", x - 22.7, 561.5, 36.5, label, `transform="rotate(-34 ${x - 22.7} 561.5)"`);
});
out += text("c-title", 240.5, 266, 405, "Delayed Orders and On Time Orders by");
out += text("c-title", 650, 266, 120, "Year_Month");
out += text("c-leg h", 125.5, 297, 102.5, "Order_Delayed");
out += text("c-leg", 245.5, 297, 52, "Delayed");
out += text("c-leg", 315, 297, 55.5, "On Time");
out += `<circle class="delayed" cx="239" cy="291" r="4"/><circle class="ontime" cx="308" cy="291" r="4"/>`;
out += text("c-axis", 492, 583, 69, "Year_Month");
out += text("c-axis", 138, 491, 140, "Count of Order_Delayed", `transform="rotate(-90 138 491)"`);
out += `<path class="c-handle" d="M122.500 253v-8.500h8.500M879 244.500h8.500v8.500M122.500 579v8.500h8.500M879 587.500h8.500v-8.500M499 244.500h12M499 587.500h12M122.500 411v12M887.500 411v12"/>`;
out += `<rect class="c-frame" x="122.5" y="244.5" width="766" height="344"/>`;
document.getElementById("chart").innerHTML = out;
```
